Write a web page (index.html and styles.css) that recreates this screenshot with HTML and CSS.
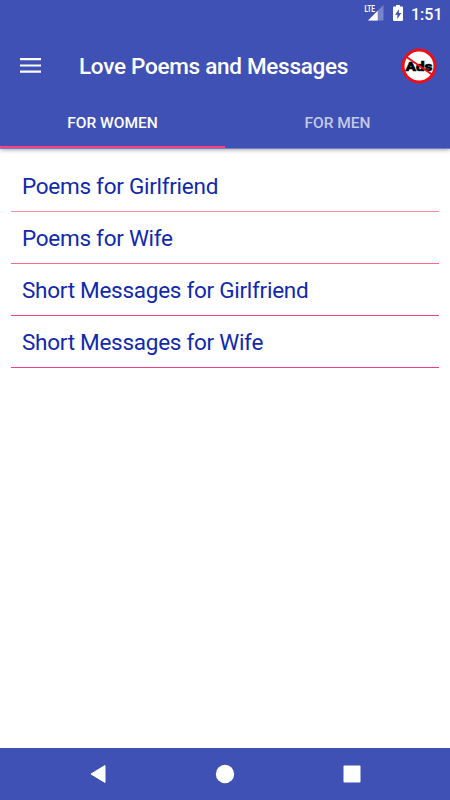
FILE: index.html
```html
<!DOCTYPE html>
<html lang="en">
<head>
<meta charset="utf-8">
<title>Love Poems and Messages</title>
<link rel="stylesheet" href="styles.css">
</head>
<body>
<div class="app">
  <header class="header">
    <div class="status">
      <svg class="signal" width="20" height="17" viewBox="0 0 20 17">
        <path d="M19.500 0V15.500H4z" fill="#fff" fill-opacity=".3"/>
        <path d="M13.700 5.800V15.500H4z" fill="#fff"/>
        <text class="lte" x="0.500" y="7" textLength="10.500" lengthAdjust="spacingAndGlyphs">LTE</text>
      </svg>
      <svg class="battery" width="10" height="17" viewBox="0 0 10 17">
        <path d="M3 0h4v1.600h2q1 0 1 1V15q0 1-1 1H1q-1 0-1-1V2.600q0-1 1-1h2z" fill="#fff"/>
        <path d="M6 4.200L2 9.700h2.400v4.300L8.200 8H5.800z" fill="#3f51b5"/>
      </svg>
      <span class="clock">1:51</span>
    </div>
    <div class="toolbar">
      <svg class="menu" width="21" height="15" viewBox="0 0 21 15">
        <path d="M0 1.200h21M0 7.500h21M0 13.600h21" stroke="#fff" stroke-width="2.200"/>
      </svg>
      <h1 class="title">Love Poems and Messages</h1>
      <svg class="no-ads" width="36" height="36" viewBox="0 0 36 36">
        <circle cx="18" cy="18" r="16" fill="#fff" stroke="#f00d14" stroke-width="3"/>
        <text class="ads" x="4.500" y="22.500" textLength="27" lengthAdjust="spacingAndGlyphs">Ads</text>
        <path d="M5.500 9L31 26.500" stroke="#f00d14" stroke-width="2"/>
      </svg>
    </div>
    <nav class="tabs">
      <div class="tab active">FOR WOMEN</div>
      <div class="tab">FOR MEN</div>
    </nav>
  </header>
  <main class="list">
    <div class="row first">Poems for Girlfriend</div>
    <div class="row second">Poems for Wife</div>
    <div class="row">Short Messages for Girlfriend</div>
    <div class="row">Short Messages for Wife</div>
  </main>
  <footer class="navbar">
    <svg width="16" height="20" viewBox="0 0 16 20"><path d="M1 10L15 1.500v17z" fill="#fff" stroke="#fff" stroke-linejoin="round"/></svg>
    <svg width="20" height="20" viewBox="0 0 20 20"><circle cx="10" cy="10" r="9.200" fill="#fff"/></svg>
    <svg width="18" height="18" viewBox="0 0 18 18"><rect x=".5" y=".5" width="17" height="17" rx="1" fill="#fff"/></svg>
  </footer>
</div>
</body>
</html>
```
FILE: styles.css
```css
* { box-sizing: border-box; }
body {
  margin: 0;
  font-family: Roboto, "Liberation Sans", sans-serif;
  background: #fff;
}
svg { display: block; flex: none; }
.app {
  width: 450px;
  height: 800px;
  display: flex;
  flex-direction: column;
}
.header {
  height: 149px;
  background: #3f51b5;
  color: #fff;
  border-bottom: 1px solid #7481c8;
  box-shadow: 0 1px 4px rgba(0, 0, 0, .35);
}
.status {
  height: 27px;
  display: flex;
  align-items: flex-start;
  padding: 5px 9px 0 0;
  justify-content: flex-end;
}
.battery { margin-left: 9px; }
.lte { font: 700 8.500px Roboto, sans-serif; fill: #fff; }
.clock {
  width: 30px;
  margin-left: 8px;
  font-size: 16px;
  font-weight: 500;
  line-height: 19px;
  text-align: right;
  white-space: nowrap;
}
.toolbar {
  height: 78px;
  display: flex;
  align-items: center;
  padding: 0 13px 0 20px;
}
.menu { margin-bottom: 2px; }
.title {
  flex: 1;
  margin: 0 0 1px 38px;
  font-size: 22.500px;
  font-weight: 500;
  letter-spacing: -.28px;
  white-space: nowrap;
}
.ads {
  font: 900 12px Roboto, sans-serif;
  fill: #000;
  stroke: #000;
  stroke-width: .5px;
}
.tabs { display: flex; height: 43px; }
.tab {
  flex: 1;
  text-align: center;
  font-size: 15.500px;
  font-weight: 500;
  line-height: 37px;
  color: rgba(255, 255, 255, .7);
}
.tab.active { color: #fff; border-bottom: 2px solid #ff4081; }
.list {
  flex: 1;
  padding: 11px 11px 0;
}
.row {
  height: 52px;
  padding-left: 11px;
  font-size: 22.500px;
  letter-spacing: -.27px;
  line-height: 52px;
  color: #1029ae;
  border-bottom: 1px solid #f43f7c;
}
.row.first { border-color: #ff8ba2; }
.row.second { border-color: #f66c8e; }
.navbar {
  height: 52px;
  background: #3f51b5;
  display: flex;
  align-items: center;
  justify-content: space-between;
  padding: 0 89px 0 90px;
}
```
